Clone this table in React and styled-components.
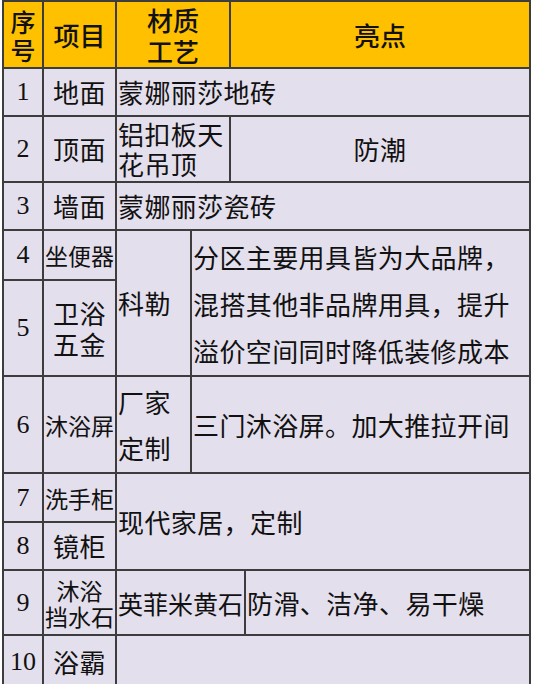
import styled, { createGlobalStyle } from 'styled-components';

const GlobalStyle = createGlobalStyle`
  html, body {
    margin: 0;
    padding: 0;
    background: #ffffff;
  }
  body {
    font-family: "Noto Sans CJK SC", "Liberation Serif", serif;
    color: #111111;
  }
`;

const Sheet = styled.div`
  display: grid;
  grid-template-columns: 38px 71px 73px 37px 13px 283px;
  grid-template-rows: 65px 46px 64px 46px 48px 94px 95px 47px 46px 63px 52px;
  gap: 2px;
  padding: 2px;
  margin-left: 2px;
  width: max-content;
  background: #3d3d3d;
`;

const Cell = styled.div`
  grid-column: ${(p) => p.$col};
  grid-row: ${(p) => p.$row};
  display: flex;
  align-items: center;
  justify-content: ${(p) => (p.$left ? 'flex-start' : 'center')};
  text-align: ${(p) => (p.$left ? 'left' : 'center')};
  padding: 0 1px;
  background: #e4dfec;
  font-size: ${(p) => p.$size || 26}px;
  line-height: ${(p) => p.$lh || 30}px;
  letter-spacing: ${(p) => (p.$tight ? 0 : 0.4)}px;
  white-space: nowrap;
`;

const HeadCell = styled(Cell)`
  background: #ffc000;
  font-weight: 500;
  letter-spacing: 0;
`;

const NumCell = styled(Cell)`
  font-family: "Liberation Serif", serif;
  letter-spacing: 0;
`;

function App() {
  return (
    <>
      <GlobalStyle />
      <Sheet>
        <HeadCell $col="1" $row="1" $size={25} $lh={28}>
          序<br />号
        </HeadCell>
        <HeadCell $col="2" $row="1">项目</HeadCell>
        <HeadCell $col="3 / 5" $row="1" $lh={31}>
          材质<br />工艺
        </HeadCell>
        <HeadCell $col="5 / 7" $row="1">亮点</HeadCell>

        <NumCell $col="1" $row="2">1</NumCell>
        <Cell $col="2" $row="2">地面</Cell>
        <Cell $col="3 / 7" $row="2" $left>蒙娜丽莎地砖</Cell>

        <NumCell $col="1" $row="3">2</NumCell>
        <Cell $col="2" $row="3">顶面</Cell>
        <Cell $col="3 / 5" $row="3" $left $lh={30}>
          铝扣板天<br />花吊顶
        </Cell>
        <Cell $col="5 / 7" $row="3">防潮</Cell>

        <NumCell $col="1" $row="4">3</NumCell>
        <Cell $col="2" $row="4">墙面</Cell>
        <Cell $col="3 / 7" $row="4" $left>蒙娜丽莎瓷砖</Cell>

        <NumCell $col="1" $row="5">4</NumCell>
        <Cell $col="2" $row="5" $size={23} $tight>坐便器</Cell>
        <Cell $col="3" $row="5 / 7" $left>科勒</Cell>
        <Cell $col="4 / 7" $row="5 / 7" $left $lh={47}>
          分区主要用具皆为大品牌，
          <br />
          混搭其他非品牌用具，提升
          <br />
          溢价空间同时降低装修成本
        </Cell>

        <NumCell $col="1" $row="6">5</NumCell>
        <Cell $col="2" $row="6" $lh={31}>
          卫浴<br />五金
        </Cell>

        <NumCell $col="1" $row="7">6</NumCell>
        <Cell $col="2" $row="7" $size={23} $tight>沐浴屏</Cell>
        <Cell $col="3" $row="7" $left $lh={46}>
          厂家<br />定制
        </Cell>
        <Cell $col="4 / 7" $row="7" $left>三门沐浴屏。加大推拉开间</Cell>

        <NumCell $col="1" $row="8">7</NumCell>
        <Cell $col="2" $row="8" $size={23} $tight>洗手柜</Cell>
        <Cell $col="3 / 7" $row="8 / 10" $left>现代家居，定制</Cell>

        <NumCell $col="1" $row="9">8</NumCell>
        <Cell $col="2" $row="9">镜柜</Cell>

        <NumCell $col="1" $row="10">9</NumCell>
        <Cell $col="2" $row="10" $size={23} $lh={26} $tight>
          沐浴<br />挡水石
        </Cell>
        <Cell $col="3 / 6" $row="10" $left $size={25} $tight>英菲米黄石</Cell>
        <Cell $col="6" $row="10" $left>防滑、洁净、易干燥</Cell>

        <NumCell $col="1" $row="11">10</NumCell>
        <Cell $col="2" $row="11">浴霸</Cell>
        <Cell $col="3 / 7" $row="11" />
      </Sheet>
    </>
  );
}

export default App;
